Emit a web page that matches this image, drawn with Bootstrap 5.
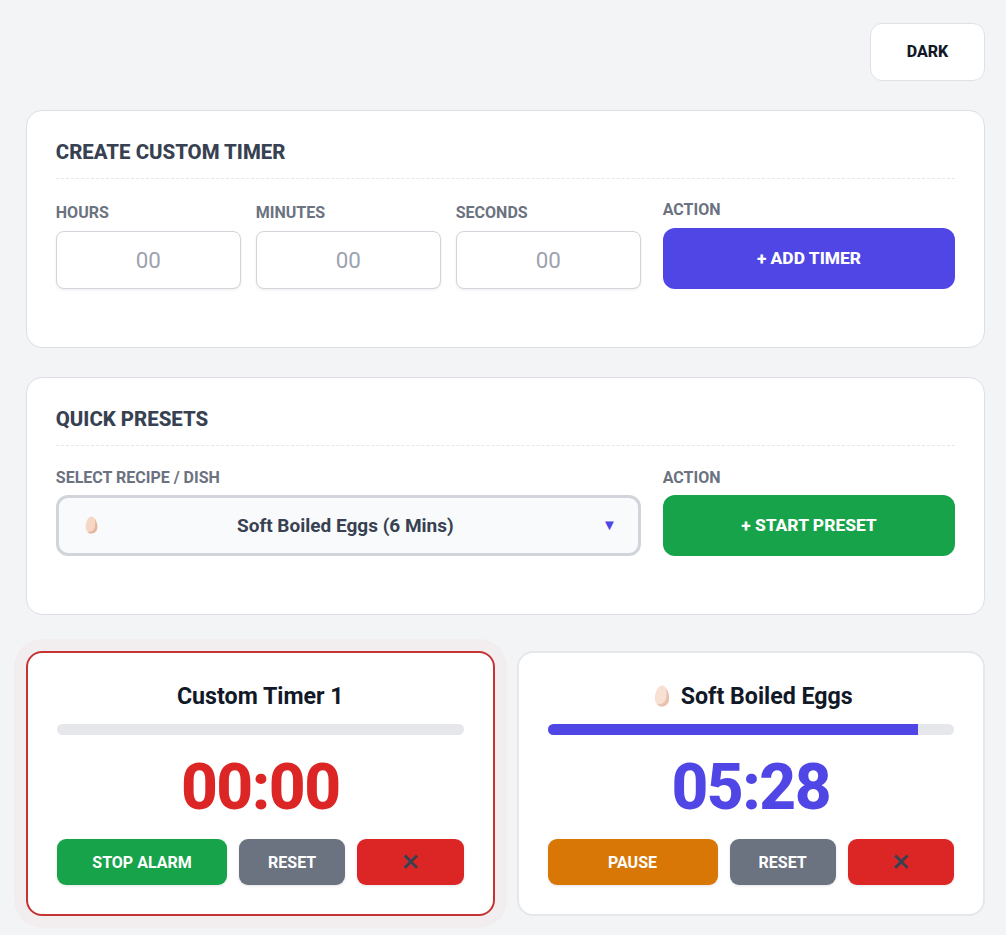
<!DOCTYPE html>
<html lang="en">
<head>
<meta charset="utf-8">
<title>Timers</title>
<link href="https://cdn.jsdelivr.net/npm/bootstrap@5.3.0/dist/css/bootstrap.min.css" rel="stylesheet">
<style>
html, body { height: 935px; overflow: hidden; }
body { background: #f3f4f6; font-family: Roboto, "Liberation Sans", sans-serif; color: #111827; padding: 23px 21px 0 26px; }
.top-row { margin-bottom: 29px; }
.theme-btn { width: 115px; height: 58px; background: #fff; border: 1px solid #dfe1e6; border-radius: 12px; color: #111827; font-weight: 800; font-size: 16px; }
.panel { border: 1px solid #dcdfe4; border-radius: 16px; background: #fff; padding: 28.8px; height: 238px; margin-bottom: 29px; }
.panel-title { font-size: 20.4px; font-weight: 800; color: #374151; line-height: 24px; margin: 0 0 22px; padding-bottom: 14px; border-bottom: 1px dashed #e5e7eb; }
.preset .panel-title { margin-bottom: 23px; }
.form-cols { display: grid; grid-template-columns: 2fr 1fr; gap: 22px; align-items: end; }
.time-cols { display: grid; grid-template-columns: repeat(3, 1fr); gap: 15px; }
.lbl { display: block; font-size: 16px; font-weight: 700; color: #6b7280; line-height: 18px; margin-bottom: 9px; }
.preset .lbl { margin-bottom: 8px; }
.time-input { height: 58px; border: 1px solid #d1d5db; border-radius: 8px; text-align: center; font-size: 22.4px; box-shadow: 0 1px 3px rgba(0,0,0,.08); font-family: Roboto, sans-serif; }
.time-input::placeholder { color: #9ca3af; }
.act-btn { width: 100%; height: 61px; border: 0; border-radius: 12px; color: #fff; font-weight: 800; font-size: 17.4px; }
.act-indigo { background: #4f46e5; }
.act-green { background: #16a34a; }
.select-box { height: 61px; display: flex; align-items: center; border: 3px solid #d1d5db; border-radius: 12px; background: #f9fafb; padding: 0 21px 0 26px; font-size: 19px; font-weight: 700; color: #374151; }
.select-box .sel-text { flex: 1; text-align: center; padding: 2px 9px 0 0; }
.caret { color: #4f46e5; font-size: 15px; line-height: 1; }
.timers { display: grid; grid-template-columns: 1fr 1fr; gap: 22px; margin-top: 36px; }
.timer { border: 2px solid #e5e7eb; border-radius: 16px; background: #fff; height: 265px; padding: 28px 29px; text-align: center; }
.timer.alarm { border-color: #c53434; box-shadow: 0 0 0 12px rgba(220,38,38,.028); }
.timer-name { font-size: 23.2px; font-weight: 700; color: #111827; line-height: 30px; margin: 0 0 13px; display: flex; align-items: center; justify-content: center; gap: 11px; }
.timer-name svg { margin-left: 5px; }
.bar { height: 11.2px; background: #e5e7eb; border-radius: 6px; }
.bar .progress-bar { background: #4f46e5; }
.clock { font-size: 64px; font-weight: 800; letter-spacing: -1.5px; line-height: 75px; margin: 15px 0 14px; }
.clock-red { color: #dc2626; }
.clock-indigo { color: #4f46e5; }
.ctl { display: grid; grid-template-columns: 1.6fr 1fr 1fr; gap: 12px; }
.ctl .btn { height: 46px; border: 0; border-radius: 9px; color: #fff; font-weight: 700; font-size: 16px; padding: 1px 0 0; box-shadow: 0 1px 3px rgba(0,0,0,.1); }
.c-green { background: #16a34a; }
.c-amber { background: #d97706; }
.c-gray { background: #6b7280; }
.ctl .btn.c-red { background: #dc2626; color: #374151; font-family: "DejaVu Sans", sans-serif; font-size: 23px; -webkit-text-stroke: .6px #374151; }
</style>
</head>
<body>
<div class="d-flex justify-content-end top-row">
  <button type="button" class="btn theme-btn">DARK</button>
</div>

<section class="panel">
  <h2 class="panel-title">CREATE CUSTOM TIMER</h2>
  <div class="form-cols">
    <div class="time-cols">
      <div><label class="lbl" for="h">HOURS</label><input id="h" class="form-control time-input" placeholder="00"></div>
      <div><label class="lbl" for="m">MINUTES</label><input id="m" class="form-control time-input" placeholder="00"></div>
      <div><label class="lbl" for="s">SECONDS</label><input id="s" class="form-control time-input" placeholder="00"></div>
    </div>
    <div>
      <span class="lbl">ACTION</span>
      <button type="button" class="btn act-btn act-indigo">+ ADD TIMER</button>
    </div>
  </div>
</section>

<section class="panel preset">
  <h2 class="panel-title">QUICK PRESETS</h2>
  <div class="form-cols">
    <div>
      <span class="lbl">SELECT RECIPE / DISH</span>
      <div class="select-box">
        <svg width="13" height="18" viewBox="0 0 14 20" aria-hidden="true"><path d="M7 .5C3.400.5.500 6.500.500 12c0 4.400 2.900 7.500 6.500 7.500s6.500-3.100 6.500-7.500C13.500 6.500 10.600.5 7 .5z" fill="#f6d7c6"/><path d="M11 3.500c1.600 2.500 2.500 5.700 2.500 8.500 0 4.400-2.900 7.500-6.500 7.500-1.800 0-3.400-.8-4.600-2.100 4.500 1 8.400-2 8.600-6.900.1-2.500 0-4.900 0-7z" fill="#e3b6a0"/></svg>
        <span class="sel-text">Soft Boiled Eggs (6 Mins)</span>
        <span class="caret">▼</span>
      </div>
    </div>
    <div>
      <span class="lbl">ACTION</span>
      <button type="button" class="btn act-btn act-green">+ START PRESET</button>
    </div>
  </div>
</section>

<div class="timers">
  <article class="timer alarm">
    <h3 class="timer-name">Custom Timer 1</h3>
    <div class="progress bar"></div>
    <div class="clock clock-red">00:00</div>
    <div class="ctl">
      <button type="button" class="btn c-green">STOP ALARM</button>
      <button type="button" class="btn c-gray">RESET</button>
      <button type="button" class="btn c-red">✕</button>
    </div>
  </article>
  <article class="timer">
    <h3 class="timer-name">
      <svg width="16" height="22" viewBox="0 0 14 20" aria-hidden="true"><path d="M7 .5C3.400.5.500 6.500.500 12c0 4.400 2.900 7.500 6.500 7.500s6.500-3.100 6.500-7.500C13.500 6.500 10.600.5 7 .5z" fill="#f8e0d2"/><path d="M11 3.500c1.600 2.500 2.500 5.700 2.500 8.500 0 4.400-2.900 7.500-6.500 7.500-1.800 0-3.400-.8-4.600-2.100 4.500 1 8.400-2 8.600-6.900.1-2.500 0-4.900 0-7z" fill="#e8c2ae"/></svg>
      <span>Soft Boiled Eggs</span>
    </h3>
    <div class="progress bar"><div class="progress-bar" style="width:91.1%"></div></div>
    <div class="clock clock-indigo">05:28</div>
    <div class="ctl">
      <button type="button" class="btn c-amber">PAUSE</button>
      <button type="button" class="btn c-gray">RESET</button>
      <button type="button" class="btn c-red">✕</button>
    </div>
  </article>
</div>
<script src="https://cdn.jsdelivr.net/npm/bootstrap@5.3.0/dist/js/bootstrap.bundle.min.js"></script>
</body>
</html>
